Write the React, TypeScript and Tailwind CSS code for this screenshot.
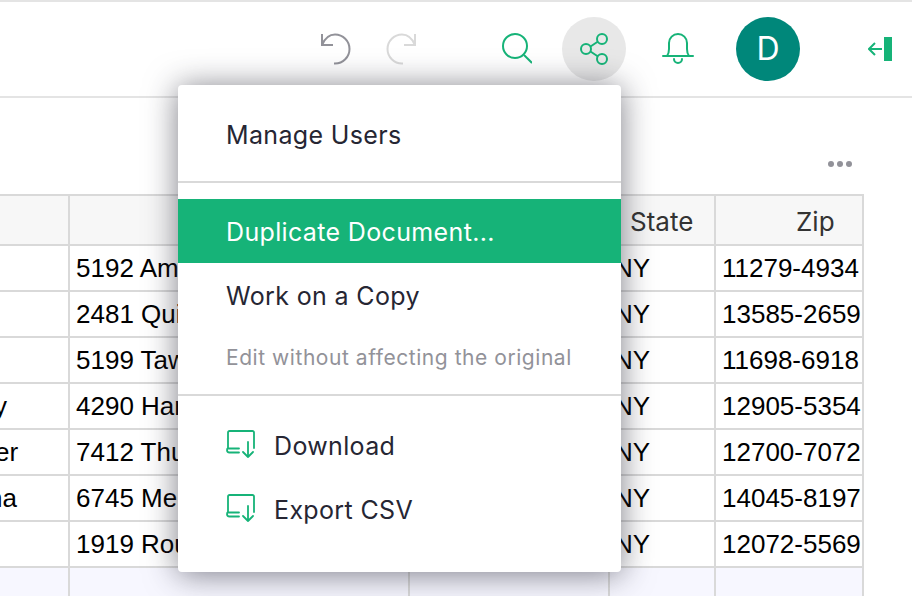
import { ReactNode } from 'react';

const rows = [
  { name: '', nameClass: '', street: '5192 Amber Lane', zip: '11279-4934' },
  { name: '', nameClass: '', street: '2481 Quiet Road', zip: '13585-2659' },
  { name: '', nameClass: '', street: '5199 Tawny Way', zip: '11698-6918' },
  { name: 'y', nameClass: '-ml-[6px]', street: '4290 Harvest Ct', zip: '12905-5354' },
  { name: 'er', nameClass: '-ml-[5px]', street: '7412 Thunder Rd', zip: '12700-7072' },
  { name: 'na', nameClass: '-ml-[12px]', street: '6745 Merry Ave', zip: '14045-8197' },
  { name: '', nameClass: '', street: '1919 Round St', zip: '12072-5569' },
];

const cell = 'border-r-2 border-b-2 border-[#d9d9d9] overflow-hidden whitespace-nowrap';

function DownloadIcon() {
  return (
    <svg className="mb-[6px]" width="30" height="28" viewBox="0 0 30 28" fill="none" stroke="#16b378" strokeWidth="1.8" strokeLinecap="round" strokeLinejoin="round">
      <path d="M2 18V2.500A1.500 1.500 0 0 1 3.500 1h23A1.500 1.500 0 0 1 28 2.500V18" />
      <path d="M13 18.500H2C1.200 18.500 1 19.500 1 20c0 1.500 1 2.500 2.500 2.500H13" />
      <path d="M22 12v15M17 22l5 5 5-5" />
    </svg>
  );
}

function MenuItem({ children, className = '' }: { children: ReactNode; className?: string }) {
  return <div className={`flex items-center h-16 pl-[48px] pt-[3px] ${className}`}>{children}</div>;
}

export default function App() {
  return (
    <div className="relative w-[912px] h-[596px] overflow-hidden bg-white font-['Inter',sans-serif]">
      <div className="h-[98px] border-t-2 border-b-2 border-[#e4e4e4] flex items-center">
        <svg className="ml-[320px]" width="32" height="34" viewBox="0 0 32 34" fill="none" stroke="#929299" strokeWidth="2">
          <path d="M2 2v11h11" />
          <path d="M2 13 C5 6 10 2.500 15 2.500 a14.500 14.500 0 0 1 0 29 h-1" />
        </svg>
        <svg className="ml-[33px]" width="32" height="34" viewBox="0 0 32 34" fill="none" stroke="#d9d9d9" strokeWidth="2">
          <path d="M30 2v11H19" />
          <path d="M30 13 C27 6 22 2.500 17 2.500 a14.500 14.500 0 0 0 0 29 h1" />
        </svg>
        <svg className="ml-[83px]" width="32" height="32" viewBox="0 0 32 32" fill="none" stroke="#16b378" strokeWidth="2">
          <circle cx="15" cy="13" r="12" />
          <path d="M24 22l8 8" />
        </svg>
        <div className="ml-[30px] w-16 h-16 rounded-full bg-[#e8e8e8] flex items-center justify-center">
          <svg width="30" height="32" viewBox="0 0 30 32" fill="none" stroke="#16b378" strokeWidth="2">
            <circle cx="7" cy="16" r="5" />
            <circle cx="23" cy="6" r="5" />
            <circle cx="23" cy="26" r="5" />
            <path d="M11.500 13.500L19 8.500M11.500 18.500L19 23.500" />
          </svg>
        </div>
        <svg className="ml-[36px]" width="32" height="32" viewBox="0 0 32 32" fill="none" stroke="#16b378" strokeWidth="2" strokeLinecap="round">
          <path d="M1 23h30" />
          <path d="M5 23c1.500-2 2-4 2-7V10a9 9 0 0 1 18 0v6c0 3 .5 5 2 7" />
          <path d="M12 26a4 4 0 0 0 8 0" />
        </svg>
        <div className="ml-[42px] w-16 h-16 rounded-full bg-[#00877a] flex items-center justify-center text-white text-[32px] leading-none">
          D
        </div>
        <svg className="ml-[68px]" width="24" height="24" viewBox="0 0 24 24" fill="none">
          <rect x="16" y="0" width="8" height="24" fill="#16b378" />
          <path d="M14 12H1M7 6l-6 6 6 6" stroke="#16b378" strokeWidth="2" />
        </svg>
      </div>

      <div className="h-[96px] flex items-center justify-end pr-[60px] pt-[36px] gap-[3px]">
        <span className="w-[6px] h-[6px] rounded-full bg-[#929299]" />
        <span className="w-[6px] h-[6px] rounded-full bg-[#929299]" />
        <span className="w-[6px] h-[6px] rounded-full bg-[#929299]" />
      </div>

      <div className="grid grid-cols-[70px_340px_200px_106px_148px] grid-rows-[50px] auto-rows-[46px] w-[864px] border-t-2 border-[#d9d9d9] font-['Liberation_Sans',sans-serif] text-[26px] text-black">
        <div className={`${cell} bg-[#f7f7f7]`} />
        <div className={`${cell} bg-[#f7f7f7]`} />
        <div className={`${cell} bg-[#f7f7f7]`} />
        <div className={`${cell} bg-[#f7f7f7] flex items-center pl-[20px] pt-[2px] font-['Inter',sans-serif] text-[#333]`}>State</div>
        <div className={`${cell} bg-[#f7f7f7] flex items-center pl-[80px] pt-[2px] font-['Inter',sans-serif] text-[#333]`}>Zip</div>
        {rows.map((row) => (
          <div key={row.zip} className="contents">
            <div className={`${cell} flex items-center pt-[1px]`}>
              <span className={row.nameClass}>{row.name}</span>
            </div>
            <div className={`${cell} flex items-center pl-[6px] pt-[1px]`}>{row.street}</div>
            <div className={cell} />
            <div className={`${cell} flex items-center pl-[4px] pt-[1px]`}>NY</div>
            <div className={`${cell} flex items-center pl-[6px] pt-[1px]`}>{row.zip}</div>
          </div>
        ))}
        <div className={`${cell} bg-[#f7f7ff]`} />
        <div className={`${cell} bg-[#f7f7ff]`} />
        <div className={`${cell} bg-[#f7f7ff]`} />
        <div className={`${cell} bg-[#f7f7ff]`} />
        <div className={`${cell} bg-[#f7f7ff]`} />
      </div>

      <div className="absolute left-[178px] top-[85px] w-[443px] h-[487px] bg-white rounded-[4px] shadow-[0_2px_32px_0_rgba(38,38,51,0.6)] text-[25px] text-[#262633] tracking-[0.35px]">
        <div className="pt-[17px]">
          <MenuItem>Manage Users</MenuItem>
        </div>
        <div className="mt-[15px] h-[2px] bg-[#d9d9d9]" />
        <div className="mt-[16px]">
          <MenuItem className="bg-[#16b378] text-white">Duplicate Document...</MenuItem>
          <MenuItem>Work on a Copy</MenuItem>
        </div>
        <div className="mt-[16px] pl-[48px] text-[21px] leading-[30px] tracking-[0.55px] text-[#929299]">Edit without affecting the original</div>
        <div className="mt-[21px] h-[2px] bg-[#d9d9d9]" />
        <div className="mt-[17px]">
          <MenuItem>
            <DownloadIcon />
            <span className="ml-[18px]">Download</span>
          </MenuItem>
          <MenuItem>
            <DownloadIcon />
            <span className="ml-[18px]">Export CSV</span>
          </MenuItem>
        </div>
      </div>
    </div>
  );
}
